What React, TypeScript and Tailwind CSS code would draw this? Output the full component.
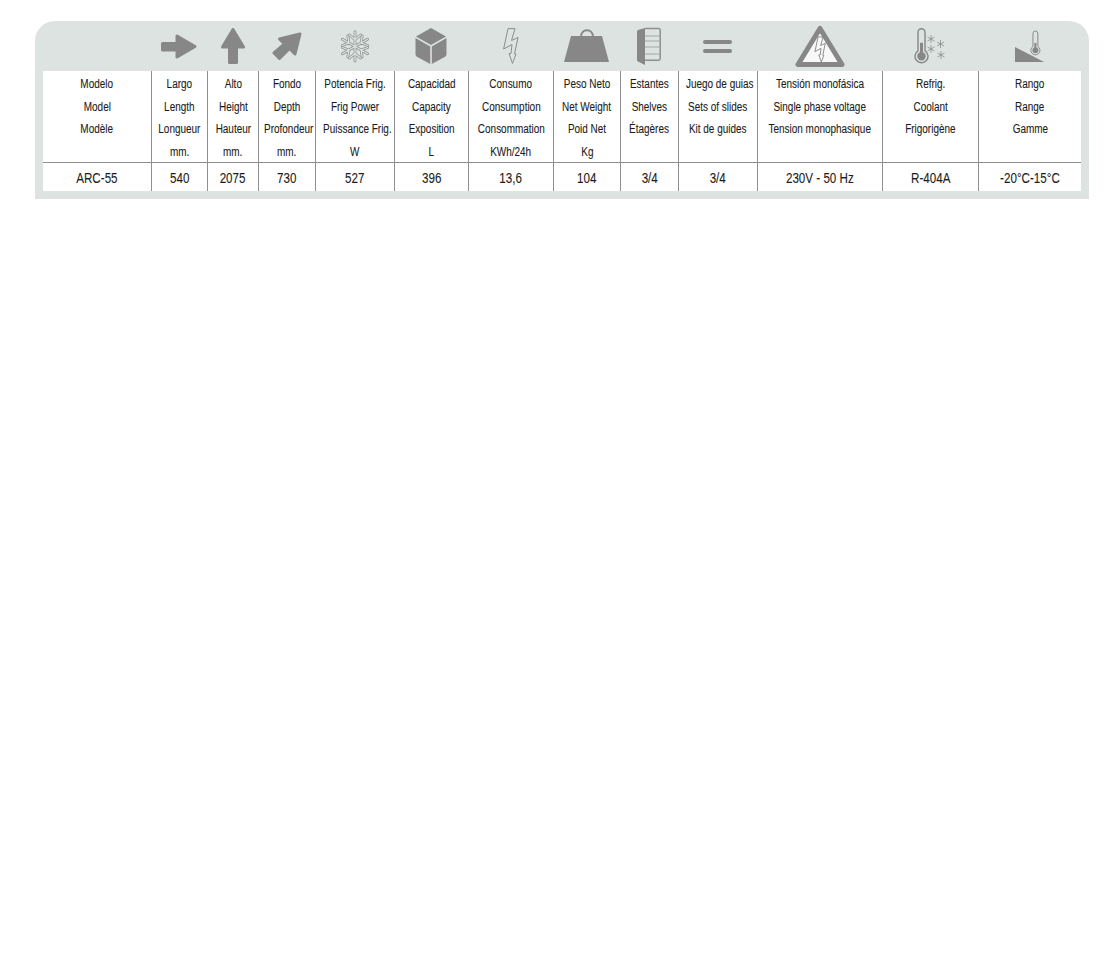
const gray = '#878787';

const columns = [
  { head: ['Modelo', 'Model', 'Modèle'], value: 'ARC-55' },
  { head: ['Largo', 'Length', 'Longueur', 'mm.'], value: '540' },
  { head: ['Alto', 'Height', 'Hauteur', 'mm.'], value: '2075' },
  { head: ['Fondo', 'Depth', 'Profondeur', 'mm.'], value: '730' },
  { head: ['Potencia Frig.', 'Frig Power', 'Puissance Frig.', 'W'], value: '527' },
  { head: ['Capacidad', 'Capacity', 'Exposition', 'L'], value: '396' },
  { head: ['Consumo', 'Consumption', 'Consommation', 'KWh/24h'], value: '13,6' },
  { head: ['Peso Neto', 'Net Weight', 'Poid Net', 'Kg'], value: '104' },
  { head: ['Estantes', 'Shelves', 'Étagères'], value: '3/4' },
  { head: ['Juego de guias', 'Sets of slides', 'Kit de guides'], value: '3/4' },
  { head: ['Tensión monofásica', 'Single phase voltage', 'Tension monophasique'], value: '230V - 50 Hz' },
  { head: ['Refrig.', 'Coolant', 'Frigorigène'], value: 'R-404A' },
  { head: ['Rango', 'Range', 'Gamme'], value: '-20°C-15°C' },
];

const gridCols = 'grid grid-cols-[108px_56px_51px_57px_79px_74px_85px_67px_58px_79px_125px_96px_103px]';
const narrow = 'inline-block scale-x-[0.83] [-webkit-text-stroke:0.1px_#1c1c1c]';

function ArrowRight() {
  return (
    <svg width="36" height="25" viewBox="0 0 36 25">
      <path d="M1.500 9.500H16V2L34 12.500 16 23V16H1.500z" fill={gray} stroke={gray} strokeWidth="3" strokeLinejoin="round" />
    </svg>
  );
}

function ArrowUp() {
  return (
    <svg width="24" height="36" viewBox="0 0 24 36">
      <path d="M12 1.500 22.500 19H15.500V34.500H8.500V19H1.500z" fill={gray} stroke={gray} strokeWidth="3" strokeLinejoin="round" />
    </svg>
  );
}

function ArrowDiagonal() {
  return (
    <svg width="30" height="28" viewBox="0 0 30 28">
      <path d="M28 2 7.500 7 12.500 12 2 21 7.500 26.500 17.500 16.500 23 22z" fill={gray} stroke={gray} strokeWidth="3" strokeLinejoin="round" />
    </svg>
  );
}

function Snowflake() {
  const arm = 'M16 16V1.500M16 9l-5.500-4.500M16 9l5.500-4.500';
  const angles = [0, 60, 120, 180, 240, 300];
  return (
    <svg width="32" height="33" viewBox="0 0 32 32" fill="none" strokeLinecap="round">
      {angles.map((r) => (
        <path key={r} d={arm} transform={`rotate(${r} 16 16)`} stroke="#8f9391" strokeWidth="2.800" />
      ))}
      {angles.map((r) => (
        <path key={r} d={arm} transform={`rotate(${r} 16 16)`} stroke="#dde3e1" strokeWidth="1.300" />
      ))}
    </svg>
  );
}

function Cube() {
  return (
    <svg width="32" height="36" viewBox="0 0 32 36" fill={gray}>
      <path d="M16 0 31 8.500 16 17 1 8.500z" />
      <path d="M.5 10 15.200 18.500V36L1.500 28.500Q.5 27.500.5 26z" />
      <path d="M31.500 10 16.800 18.500V36L30.500 28.500Q31.500 27.500 31.500 26z" />
    </svg>
  );
}

const boltPath = 'M5 .6H12L8.500 12.500 15 9.500 11.500 26H13L9.500 35.400 6 25.500H8L9 16.500.6 21z';

function Bolt() {
  return (
    <svg width="16" height="36" viewBox="0 0 16 36" fill="none">
      <path d={boltPath} stroke="#8a8e8c" strokeWidth="1" strokeLinejoin="round" />
    </svg>
  );
}

function Weight() {
  return (
    <svg width="45" height="34" viewBox="0 0 45 34" fill={gray}>
      <path d="M7 7H38L45 33H0z" />
      <path d="M17 8C17-1 29-1 29 8" fill="none" stroke={gray} strokeWidth="2" />
    </svg>
  );
}

function Shelf() {
  return (
    <svg width="24" height="38" viewBox="0 0 24 38" fill="none">
      <path d="M8 1 1 3Q0 3.500 0 4.500V33Q0 34 1 34.500L8 38z" fill={gray} />
      <path d="M8 1.500H21.500Q23.200 1.500 23.200 3.200V31.500Q23.200 33.200 21.500 33.200H8" stroke="#8f8f8f" strokeWidth="1.500" />
      <path d="M8 9H23M8 14H23M8 20H23M8 27H23" stroke="#a3a7a5" strokeWidth="1.200" />
    </svg>
  );
}

function EqualBars() {
  return (
    <svg width="29" height="13" viewBox="0 0 29 13" fill={gray}>
      <rect x="0" y="0" width="29" height="4" rx="2" />
      <rect x="0" y="9" width="29" height="4" rx="2" />
    </svg>
  );
}

function Warning() {
  return (
    <svg width="50" height="44" viewBox="0 0 50 44">
      <path d="M25 4.500 3 40.500H47z" fill="#f7f8f7" stroke={gray} strokeWidth="5" strokeLinejoin="round" />
      <g transform="translate(19.500 12.500) scale(.72)">
        <path d={boltPath} fill="none" stroke="#808080" strokeWidth="1.200" strokeLinejoin="round" />
      </g>
    </svg>
  );
}

function Thermometer({ mercury }: { mercury: number }) {
  return (
    <g>
      <path d="M3.500 22V3.500a3.500 3.500 0 0 1 7 0V22a6.500 6.500 0 1 1-7 0z" fill="#dde3e1" stroke={gray} strokeWidth="1.400" />
      <rect x="5.500" y={mercury} width="3" height={26 - mercury} fill={gray} />
      <circle cx="7" cy="27.500" r="4.200" fill={gray} />
    </g>
  );
}

function ThermometerCold() {
  const star = 'M0-4V4M-3.500-2 3.500 2M-3.500 2 3.500-2';
  const stars = [[17, 11], [26.5, 16], [17, 21], [27, 27]];
  return (
    <svg width="32" height="36" viewBox="0 0 32 36" fill="none">
      <g transform="translate(.5 .8)">
        <Thermometer mercury={14} />
      </g>
      {stars.map(([x, y]) => (
        <path key={x + '-' + y} d={star} transform={`translate(${x} ${y})`} stroke="#8a8e8c" strokeWidth=".8" />
      ))}
    </svg>
  );
}

function TempRange() {
  return (
    <svg width="30" height="33" viewBox="0 0 30 33" fill="none">
      <path d="M0 17 29 32H0z" fill={gray} />
      <g transform="translate(15.500 1) scale(.7)">
        <Thermometer mercury={17} />
      </g>
    </svg>
  );
}

const icons = [
  null,
  <ArrowRight />,
  <ArrowUp />,
  <ArrowDiagonal />,
  <Snowflake />,
  <Cube />,
  <Bolt />,
  <Weight />,
  <Shelf />,
  <EqualBars />,
  <Warning />,
  <ThermometerCold />,
  <TempRange />,
];

export default function App() {
  return (
    <div className="min-h-[959px] bg-white pt-[21px] pl-[35px] font-['Liberation_Sans',sans-serif] text-[#1c1c1c]">
      <div className="w-[1054px] rounded-t-[20px] bg-[#dde3e1] px-2 pb-2">
        <div className={`${gridCols} h-[50px]`}>
          {icons.map((icon, i) => (
            <div key={i} className="flex items-center justify-center">
              {icon}
            </div>
          ))}
        </div>
        <div className="bg-white">
          <div className={`${gridCols} h-[92px] border-b border-[#8f8f8f]`}>
            {columns.map((col, i) => (
              <div
                key={i}
                className={`pt-[2px] text-center text-[12px] leading-[22.5px] whitespace-nowrap ${i > 0 ? 'border-l border-[#8f8f8f]' : ''}`}
              >
                {col.head.map((line) => (
                  <div key={line}>
                    <span className={narrow}>{line}</span>
                  </div>
                ))}
              </div>
            ))}
          </div>
          <div className={`${gridCols} h-[28px]`}>
            {columns.map((col, i) => (
              <div
                key={i}
                className={`flex h-[28px] items-center justify-center pt-[2px] text-[14px] leading-[26px] whitespace-nowrap ${i > 0 ? 'border-l border-[#8f8f8f]' : ''}`}
              >
                <span className={narrow}>{col.value}</span>
              </div>
            ))}
          </div>
        </div>
      </div>
    </div>
  );
}
